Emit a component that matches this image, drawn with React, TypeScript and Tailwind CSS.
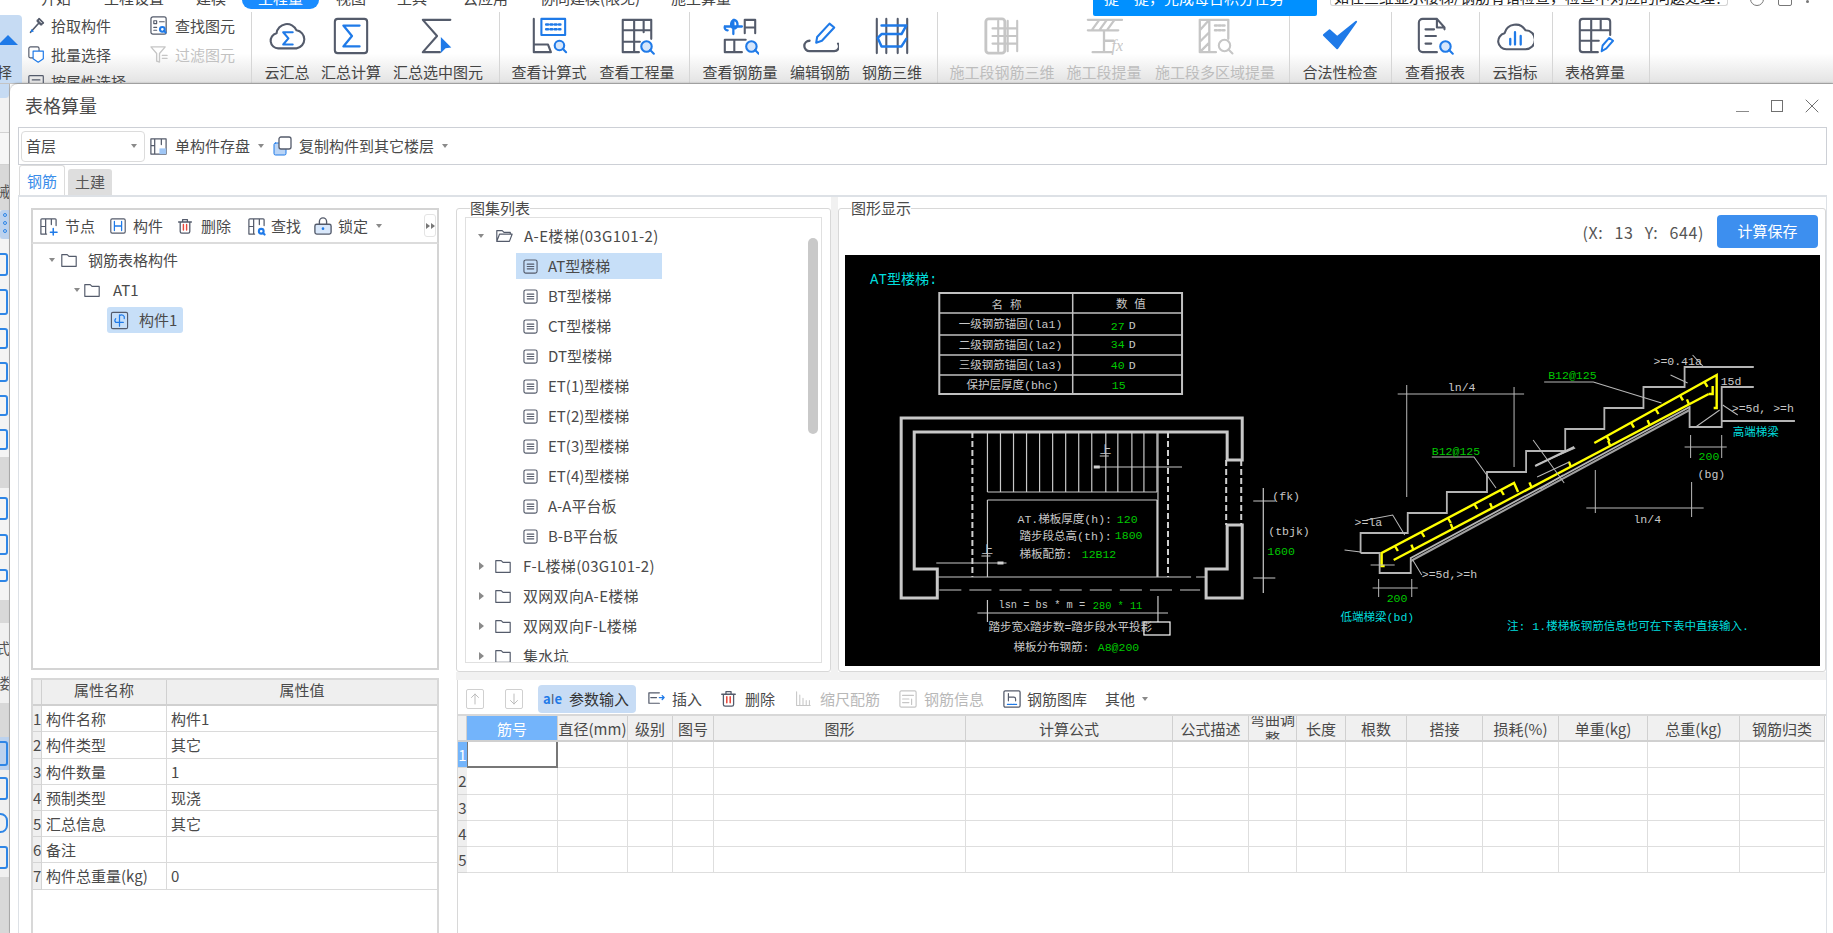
import React from "react";

const S = "#545b6b";
const B = "#1f7ae8";
const G = "#c6c6c6";

function Svg({ size = 38, vb = 40, children, className = "" }: { size?: number; vb?: number; children: React.ReactNode; className?: string }) {
  return (
    <svg width={size} height={size} viewBox={`0 0 ${vb} ${vb}`} fill="none" strokeLinecap="round" strokeLinejoin="round" className={`shrink-0 ${className}`}>
      {children}
    </svg>
  );
}

const Lens = ({ x, y, r = 5, c = B, fill = "#d6e6fb" }: { x: number; y: number; r?: number; c?: string; fill?: string }) => (
  <g stroke={c} strokeWidth={2.2}>
    <circle cx={x} cy={y} r={r} fill={fill} />
    <path d={`M${x + r * 0.7} ${y + r * 0.7}l${r * 0.7} ${r * 0.7}`} />
  </g>
);

const ribbonIcons: Record<string, React.ReactNode> = {
  cloudSum: (
    <>
      <path d="M11 33a8 8 0 0 1-2-15.8A11 11 0 0 1 30 14a9.6 9.6 0 0 1 0 19z" stroke={S} strokeWidth={2.2} />
      <path d="M26 16h-10l5.500 6.500-5.500 6.500h10" stroke={B} strokeWidth={2.2} />
    </>
  ),
  boxSum: (
    <>
      <rect x="3" y="2" width="34" height="36" rx="3" stroke={S} strokeWidth={2.2} />
      <path d="M29 9H12l9 11-9 11h17" stroke={B} strokeWidth={2.4} />
    </>
  ),
  sumSel: (
    <>
      <path d="M33 3H4l15 17L4 37h18" stroke={S} strokeWidth={2.2} />
      <path d="M23 21l11 11-6 1-5 5z" fill={B} />
    </>
  ),
  calc: (
    <>
      <path d="M4 2v35h18l-3-8H4" stroke={S} strokeWidth={2.2} />
      <rect x="12" y="2" width="25" height="17" fill="#fff" stroke={B} strokeWidth={2.2} />
      <path d="M17 8h15M17 13h15" stroke={B} strokeWidth={2.6} strokeDasharray="2 2.500" />
      <Lens x={31} y={30} />
    </>
  ),
  qty: (
    <>
      <path d="M5 37V3h30v20M5 14h30M5 26h18M17 3v34M27 3v13M5 37h17" stroke={S} strokeWidth={2.2} />
      <Lens x={30} y={31} r={5.500} />
    </>
  ),
  rebarQ: (
    <>
      <path d="M14 3a5 5 0 0 0-1 9M14 3a5 5 0 0 1 1 9M4 10h18M13 3v15M4 10a3 3 0 0 0 3 4" stroke={B} strokeWidth={2.4} />
      <path d="M25 17V3h11v14M25 11h11M4 37V24h22M4 37h18M14 24v13" stroke={S} strokeWidth={2.2} />
      <Lens x={32} y={31} r={5.500} />
    </>
  ),
  edit: (
    <>
      <path d="M9 25a5.500 5.500 0 0 0 0 11h26a5 5 0 0 0 4-8" stroke={S} strokeWidth={2.4} />
      <path d="M16 27l1-6L30 7l5 4-13 14z" stroke={B} strokeWidth={2.2} />
    </>
  ),
  r3d: (
    <>
      <path d="M4 2v36M14 2v36M26 2v36M36 2v36" stroke={S} strokeWidth={2.2} />
      <path d="M9 9h26l-5 9H9l-4 4 4 9h21l5-8" stroke={B} strokeWidth={2.6} />
    </>
  ),
  seg3d: (
    <>
      <rect x="3" y="2" width="20" height="36" rx="3" stroke={G} strokeWidth={3} />
      <path d="M10 12h26M10 20h26M10 28h26M16 4v32M26 4v32M36 4v32" stroke={G} strokeWidth={2.200} />
    </>
  ),
  segFx: (
    <>
      <path d="M3 3h36M3 14h32M20 14v22M8 37h20M20 25h10M7 14l8-11M15 14l8-11M23 14l8-11" stroke={G} strokeWidth={2.4} />
      <text x="28" y="36" fontSize="17" fontStyle="italic" fontFamily="'Liberation Serif',serif" fill={G}>fx</text>
    </>
  ),
  segArea: (
    <>
      <path d="M4 37V3h30v20M4 37h17M14 3v34M4 14l10-11M4 26l10-10M4 37l10-10" stroke={G} strokeWidth={2.4} />
      <path d="M20 9h12M20 14h12" stroke={G} strokeWidth={2.6} strokeDasharray="2 2" />
      <Lens x={30} y={30} r={6} c={G} fill="#fff" />
    </>
  ),
  check: <path d="M3 19l14 14L37 5 17 21 9 14z" fill={B} stroke={B} strokeWidth={2} />,
  report: (
    <>
      <path d="M30 13v-2l-8-9H7a4 4 0 0 0-4 4v27a4 4 0 0 0 4 4h15M22 2v9h8" stroke={S} strokeWidth={2.2} />
      <path d="M10 13h9M10 20h11M10 28h6" stroke={S} strokeWidth={2.2} />
      <Lens x={31} y={31} r={5.500} />
    </>
  ),
  cloudBar: (
    <>
      <path d="M11 34a8.500 8.500 0 0 1-2-16.800A12 12 0 0 1 31 14a10 10 0 0 1 0 20z" stroke={S} strokeWidth={2.2} />
      <path d="M15 23v6M20 16v13M26 20v9" stroke={B} strokeWidth={2.4} />
    </>
  ),
  table: (
    <>
      <path d="M23 37H7a3 3 0 0 1-3-3V5a3 3 0 0 1 3-3h26a3 3 0 0 1 3 3v14M4 14h32M4 25h20M16 2v35M26 2v12" stroke={S} strokeWidth={2.2} />
      <path d="M27 36l1-6 7-8 4 3-7 8z" stroke={B} strokeWidth={2} />
    </>
  ),
};

const ribbonGroups: { key: string; label: string; w: string; off?: boolean }[][] = [
  [
    { key: "cloudSum", label: "云汇总", w: "w-[70px]" },
    { key: "boxSum", label: "汇总计算", w: "w-[58px]" },
    { key: "sumSel", label: "汇总选中图元", w: "w-[116px]" },
  ],
  [
    { key: "calc", label: "查看计算式", w: "w-[98px]" },
    { key: "qty", label: "查看工程量", w: "w-[78px]" },
  ],
  [
    { key: "rebarQ", label: "查看钢筋量", w: "w-[100px]" },
    { key: "edit", label: "编辑钢筋", w: "w-[60px]" },
    { key: "r3d", label: "钢筋三维", w: "w-[84px]" },
  ],
  [
    { key: "seg3d", label: "施工段钢筋三维", w: "w-[128px]", off: true },
    { key: "segFx", label: "施工段提量", w: "w-[76px]", off: true },
    { key: "segArea", label: "施工段多区域提量", w: "w-[146px]", off: true },
  ],
  [{ key: "check", label: "合法性检查", w: "w-[100px]" }],
  [{ key: "report", label: "查看报表", w: "w-[86px]" }],
  [{ key: "cloudBar", label: "云指标", w: "w-[70px]" }],
  [{ key: "table", label: "表格算量", w: "w-[84px]" }],
];
const groupWidths = ["w-[247px]", "w-[189px]", "w-[247px]", "w-[351px]", "w-[101px]", "w-[87px]", "w-[72px]", "w-[96px]"];

const Sep = () => <div className="w-px self-stretch mt-[3px] bg-[#d6d6d6] shrink-0" />;
const Caret = ({ className = "" }: { className?: string }) => (
  <span className={`inline-block w-0 h-0 border-x-[3.500px] border-x-transparent border-t-[4px] border-t-[#8a8a8a] shrink-0 ${className}`} />
);
const CaretR = () => <span className="inline-block w-0 h-0 border-y-[4px] border-y-transparent border-l-[5px] border-l-[#8a8a8a] shrink-0" />;

function TopRow() {
  return (
    <div className="relative z-10 h-[9px] flex bg-white text-[15px] text-[#444] pl-[41px]">
      {[
        ["开始", "w-[63px]"],
        ["工程设置", "w-[92px]"],
        ["建模", "w-[46px]"],
      ].map(([t, w]) => (
        <div key={t} className={`${w} h-[9px] overflow-hidden`}>
          <div className="-mt-[12px] leading-[20px]">{t}</div>
        </div>
      ))}
      <div className="w-[77px] h-[9px] overflow-hidden bg-[#1a8cff] rounded-b-[9px] text-white text-center">
        <div className="-mt-[12px] leading-[20px]">工程量</div>
      </div>
      <div className="w-[17px]" />
      {[
        ["视图", "w-[61px]"],
        ["工具", "w-[66px]"],
        ["云应用", "w-[77px]"],
        ["协同建模(限免)", "w-[131px]"],
        ["施工算量", "w-[422px]"],
      ].map(([t, w]) => (
        <div key={t} className={`${w} h-[9px] overflow-hidden`}>
          <div className="-mt-[12px] leading-[20px]">{t}</div>
        </div>
      ))}
      <div className="w-[224px] h-[16px] bg-[#0090ff] rounded-b-[2px] overflow-hidden text-white pl-[11px] shrink-0">
        <div className="-mt-[12px] leading-[20px] whitespace-nowrap">提一提，完成每日积分任务</div>
      </div>
      <div className="ml-[13px] w-[398px] h-[6px] border-x border-b border-[#d4d4d4] rounded-b-[3px] overflow-hidden shrink-0 pl-[3px] text-[#222]">
        <div className="-mt-[13px] leading-[20px] whitespace-nowrap">如在三维显示楼梯/钢筋有错检查，检查中对应的问题处理？</div>
      </div>
      <div className="ml-[22px] h-[6px] flex gap-[14px] overflow-hidden">
        <div className="w-[14px] h-[14px] -mt-[8px] rounded-full border border-[#777]" />
        <div className="w-[14px] h-[14px] -mt-[8px] rounded-[2px] border border-[#777]" />
        <div className="w-[3px] h-[3px] rounded-full bg-[#777]" />
      </div>
    </div>
  );
}

function SmallTool({ icon, label, off, cls = "" }: { icon: React.ReactNode; label: string; off?: boolean; cls?: string }) {
  return (
    <div className={`flex items-center ${cls} ${off ? "text-[#c2c2c2]" : "text-[#4a4a4a]"}`}>
      {icon}
      <span className="whitespace-nowrap">{label}</span>
    </div>
  );
}

function Ribbon() {
  return (
    <div className="h-[75px] flex overflow-hidden bg-linear-to-b from-white via-white via-60% to-[#e3e3e3] border-b border-[#c4c4c4] text-[15px] leading-[20px] shrink-0">
      <div className="w-[22px] mt-[6px] bg-[#c6dbf3] rounded-tr-[4px] shrink-0 overflow-hidden text-[#444]">
        <div className="w-0 h-0 mt-[20px] -ml-[2px] border-x-[10px] border-x-transparent border-b-[10px] border-b-[#1f7ae8]" />
        <div className="mt-[17px] -ml-[3px]">择</div>
      </div>
      <div className="w-[229px] shrink-0 pt-[2px] pl-[6px] flex">
        <div className="w-[122px]">
          <SmallTool
            cls="h-[29px] gap-[6px]"
            label="拾取构件"
            icon={
              <Svg size={17} vb={20}>
                <path d="M3 18l9-10M11 4l5 5M13 2l5 5-3 2-4-4z" stroke={S} strokeWidth={2} />
                <path d="M3 18l1-4 3 3z" fill={B} />
              </Svg>
            }
          />
          <SmallTool
            cls="h-[29px] gap-[6px]"
            label="批量选择"
            icon={
              <Svg size={17} vb={20}>
                <rect x="1" y="1" width="12" height="13" rx="2" stroke={S} strokeWidth={1.400} />
                <path d="M6 6h12v9l-6 4-6-4z" fill="#fff" stroke={B} strokeWidth={1.400} />
              </Svg>
            }
          />
          <SmallTool
            cls="h-[22px] mt-[2px] gap-[6px]"
            label="按属性选择"
            icon={
              <Svg size={17} vb={20}>
                <rect x="1" y="2" width="17" height="16" rx="1" stroke={S} strokeWidth={1.400} />
                <path d="M5 7h9M5 12h9" stroke={S} strokeWidth={1.400} />
              </Svg>
            }
          />
        </div>
        <div>
          <SmallTool
            cls="h-[29px] gap-[6px]"
            label="查找图元"
            icon={
              <Svg size={19} vb={20}>
                <rect x="1" y="1" width="16" height="18" rx="2" stroke={S} strokeWidth={1.300} />
                <path d="M4 5h3v3H4zM10 6h5M4 12h3M4 15h3" stroke={S} strokeWidth={1.200} />
                <Lens x={13} y={14} r={2.500} fill="#fff" />
              </Svg>
            }
          />
          <SmallTool
            cls="h-[29px] gap-[6px]"
            off
            label="过滤图元"
            icon={
              <Svg size={19} vb={20}>
                <path d="M1 2h15l-6 7v9l-3-1V9z" stroke={G} strokeWidth={1.400} />
                <path d="M13 11h5M13 14h5" stroke={G} strokeWidth={1.400} />
              </Svg>
            }
          />
        </div>
      </div>
      <Sep />
      {ribbonGroups.map((g, i) => (
        <React.Fragment key={i}>
          <div className={`${groupWidths[i]} flex shrink-0`}>
            {g.map((b) => (
              <div key={b.label} className={`${b.w} shrink-0 flex flex-col items-center pt-[8px]`}>
                <Svg>{ribbonIcons[b.key]}</Svg>
                <span className={`mt-[7px] whitespace-nowrap ${b.off ? "text-[#bdbdbd]" : "text-[#444]"}`}>{b.label}</span>
              </div>
            ))}
          </div>
          <Sep />
        </React.Fragment>
      ))}
      <div className="flex-1" />
    </div>
  );
}

const StripIcon = ({ cls }: { cls: string }) => <div className={`-ml-[7px] w-[15px] border-2 border-[#2f86e6] rounded-[3px] shrink-0 ${cls}`} />;

function Sidebar() {
  return (
    <div className="w-[10px] shrink-0 bg-[#ececec] border-r border-[#b4b4b4] overflow-hidden flex flex-col text-[15px] leading-[20px] text-[#555]">
      <div className="h-[14px] bg-[#c6dbf3] rounded-br-[4px] shrink-0" />
      <div className="h-[34px] bg-[#f2f2f2] shrink-0" />
      <div className="h-[33px] bg-[#f6f6f6] border-y border-[#d2d2d2] shrink-0" />
      <div className="h-[45px] bg-[#d8d8d8] shrink-0 pt-[16px]">
        <div className="-ml-[5px]">械</div>
      </div>
      <div className="h-[29px] bg-[#bcd2ee] rounded-l-[3px] shrink-0 pl-[3px] flex flex-col gap-[4px] py-[3px]">
        <div className="w-[4px] h-[4px] rounded-full border border-[#2f86e6]" />
        <div className="w-[4px] h-[4px] rounded-full border border-[#2f86e6]" />
        <div className="w-[4px] h-[4px] rounded-full border border-[#2f86e6]" />
      </div>
      <div className="shrink-0 flex flex-col bg-[#f4f4f4] pt-[14px] gap-[13px] h-[218px]">
        <StripIcon cls="h-[23px]" />
        <StripIcon cls="h-[26px]" />
        <StripIcon cls="h-[21px]" />
        <StripIcon cls="h-[20px]" />
        <StripIcon cls="h-[21px]" />
        <StripIcon cls="h-[21px]" />
      </div>
      <div className="h-[31px] bg-[#d8d8d8] shrink-0" />
      <div className="h-[112px] shrink-0 flex flex-col bg-[#f4f4f4] pt-[9px] gap-[14px]">
        <StripIcon cls="h-[23px]" />
        <StripIcon cls="h-[21px]" />
        <StripIcon cls="h-[13px]" />
      </div>
      <div className="h-[23px] bg-[#d8d8d8] shrink-0" />
      <div className="h-[80px] bg-[#f0f0f0] shrink-0 pt-[15px]">
        <div className="-ml-[5px]">式</div>
        <div className="-ml-[5px] mt-[15px]">楼</div>
      </div>
      <div className="h-[34px] bg-[#d8d8d8] shrink-0" />
      <div className="h-[33px] bg-[#bcd2ee] shrink-0">
        <StripIcon cls="h-[25px] mt-[4px]" />
      </div>
      <div className="h-[107px] bg-[#f0f0f0] shrink-0 flex flex-col pt-[7px] gap-[13px]">
        <StripIcon cls="h-[23px]" />
        <StripIcon cls="h-[20px] rounded-full" />
        <StripIcon cls="h-[23px]" />
      </div>
      <div className="flex-1 bg-[#d8d8d8]" />
    </div>
  );
}

function ToolItem({ cls, icon, label, gap = "gap-[6px]", off }: { cls: string; icon: React.ReactNode; label: string; gap?: string; off?: boolean }) {
  return (
    <div className={`flex items-center shrink-0 ${cls} ${gap} ${off ? "text-[#b8b8b8]" : "text-[#4a4a4a]"}`}>
      {icon}
      <span className="whitespace-nowrap">{label}</span>
    </div>
  );
}

const HBox = ({ extra }: { extra?: React.ReactNode }) => (
  <Svg size={19} vb={20}>
    <path d="M2 18V3a1 1 0 0 1 1-1h14a1 1 0 0 1 1 1v6M2 18h6M7 2v16M2 10h5M13 2v6" stroke={S} strokeWidth={1.300} />
    {extra}
  </Svg>
);

function LeftColumn() {
  return (
    <div className="w-[437px] shrink-0 pl-[12px] pr-[17px] pt-[11px] flex flex-col text-[15px] leading-[20px]">
      <div className="h-[36px] border-2 border-[#d4d4d4] border-b-[#dcdcdc] flex items-center shrink-0 relative">
        <ToolItem
          cls="ml-[6px]"
          gap="gap-[7px]"
          label="节点"
          icon={<HBox extra={<path d="M15 12v7M12 16h7" stroke={B} strokeWidth={1.600} />} />}
        />
        <ToolItem
          cls="ml-[14px]"
          label="构件"
          icon={
            <Svg size={18} vb={20}>
              <rect x="2" y="2" width="16" height="16" rx="1.500" stroke={S} strokeWidth={1.300} />
              <path d="M6 5v10M14 5v10M6 10h8" stroke={B} strokeWidth={1.400} />
            </Svg>
          }
        />
        <ToolItem
          cls="ml-[14px]"
          gap="gap-[8px]"
          label="删除"
          icon={
            <Svg size={16} vb={20}>
              <path d="M2 5h16M7 5V2h6v3M4 5v12a2 2 0 0 0 2 2h8a2 2 0 0 0 2-2V5" stroke={S} strokeWidth={1.600} />
              <path d="M8 8v7M12 8v7" stroke="#e8483b" strokeWidth={1.800} />
            </Svg>
          }
        />
        <ToolItem cls="ml-[16px]" gap="gap-[5px]" label="查找" icon={<HBox extra={<Lens x={15} y={15} r={2.500} fill="#fff" />} />} />
        <ToolItem
          cls="ml-[13px]"
          label="锁定"
          icon={
            <Svg size={18} vb={20}>
              <path d="M6 8V5a4 4 0 0 1 8 0v3" stroke={S} strokeWidth={1.500} />
              <rect x="1" y="8" width="18" height="11" rx="2" stroke={S} strokeWidth={1.500} fill="#d9e8fb" />
              <circle cx="10" cy="13" r="1.500" fill={B} />
            </Svg>
          }
        />
        <Caret className="ml-[8px]" />
        <div className="absolute right-[1px] top-[4px] w-[12px] h-[23px] border border-[#e4e4e4] rounded-[3px] flex items-center justify-center gap-px">
          <span className="w-0 h-0 border-y-[3px] border-y-transparent border-l-[4px] border-l-[#777]" />
          <span className="w-0 h-0 border-y-[3px] border-y-transparent border-l-[4px] border-l-[#777]" />
        </div>
      </div>
      <div className="h-[426px] border-x-2 border-b-2 border-[#d4d4d4] shrink-0 text-[#4a4a4a] pt-[1px]">
        <div className="h-[30px] flex items-center pl-[16px]">
          <Caret className="mr-[5px]" />
          <Folder />
          <span className="ml-[10px]">钢筋表格构件</span>
        </div>
        <div className="h-[30px] flex items-center pl-[41px]">
          <Caret className="mr-[3px]" />
          <Folder />
          <span className="ml-[12px]">AT1</span>
        </div>
        <div className="ml-[74px] w-[76px] h-[26px] mt-[2px] bg-[#c7dff8] rounded-[3px] flex items-center pl-[3px] gap-[10px]">
          <Svg size={19} vb={20}>
            <rect x="1.500" y="1.500" width="17" height="17" rx="1.500" stroke={S} strokeWidth={1.200} />
            <path d="M10 4v12M6 8a3 3 0 0 0 0 4h8M10 5a3 3 0 0 1 5 3" stroke={B} strokeWidth={1.300} />
          </Svg>
          <span>构件1</span>
        </div>
      </div>
      <div className="mt-[8px] flex-1 border-2 border-b-0 border-[#d8d8d8] text-[#4a4a4a]">
        <div className="grid grid-cols-[9px_125px_1fr] auto-rows-[26.200px]">
          <div className="h-[26px] bg-[#efefef] border-r border-b-2 border-[#d0d0d0]" />
          <div className="h-[26px] bg-[#efefef] border-r border-b-2 border-[#d0d0d0] text-center">属性名称</div>
          <div className="h-[26px] bg-[#efefef] border-b-2 border-[#d0d0d0] text-center">属性值</div>
          {[
            ["构件名称", "构件1"],
            ["构件类型", "其它"],
            ["构件数量", "1"],
            ["预制类型", "现浇"],
            ["汇总信息", "其它"],
            ["备注", ""],
            ["构件总重量(kg)", "0"],
          ].map(([a, b], i) => (
            <React.Fragment key={a}>
              <div className="bg-[#efefef] border-r border-b border-[#d4d4d4] text-center leading-[26px] overflow-hidden">{i + 1}</div>
              <div className="border-r border-b border-[#dadada] pl-[4px] leading-[26px] whitespace-nowrap overflow-hidden">{a}</div>
              <div className="border-b border-[#dadada] pl-[4px] leading-[26px]">{b}</div>
            </React.Fragment>
          ))}
        </div>
      </div>
    </div>
  );
}

const Folder = ({ open }: { open?: boolean }) => (
  <Svg size={18} vb={20}>
    {open ? (
      <path d="M2 16V4h6l2 2h7v2M2 16l3-8h14l-3 8z" stroke={S} strokeWidth={1.300} />
    ) : (
      <path d="M2 17V4h6l2 2h8v11z" stroke={S} strokeWidth={1.300} />
    )}
  </Svg>
);

const ListIcon = () => (
  <Svg size={15} vb={16}>
    <rect x="1" y="1" width="14" height="14" rx="2" stroke={S} strokeWidth={1.200} />
    <path d="M4.500 5.500h7M4.500 8h7M4.500 10.500h7" stroke={S} strokeWidth={1.200} />
  </Svg>
);

function AtlasList() {
  const items = ["AT型楼梯", "BT型楼梯", "CT型楼梯", "DT型楼梯", "ET(1)型楼梯", "ET(2)型楼梯", "ET(3)型楼梯", "ET(4)型楼梯", "A-A平台板", "B-B平台板"];
  const folders = ["F-L楼梯(03G101-2)", "双网双向A-E楼梯", "双网双向F-L楼梯", "集水坑"];
  return (
    <fieldset className="w-[375px] shrink-0 mt-[2px] h-[473px] border border-[#d8d8d8] rounded-[3px] px-[8px] pb-[8px]">
      <legend className="ml-[5px] h-[18px] leading-[18px] text-[15px] text-[#4a4a4a]">图集列表</legend>
      <div className="relative h-[446px] border border-[#e0e0e0] overflow-hidden pt-[3px] text-[15px] leading-[20px] text-[#4a4a4a]">
        <div className="h-[30px] flex items-center pl-[12px]">
          <Caret />
          <span className="w-[11px]" />
          <Folder open />
          <span className="ml-[11px] whitespace-nowrap tracking-[0.4px]">A-E楼梯(03G101-2)</span>
        </div>
        {items.map((t, i) => (
          <div key={t} className="h-[30px] flex items-center">
            <div className={`ml-[50px] w-[146px] h-[26px] pl-[7px] flex items-center gap-[10px] ${i === 0 ? "bg-[#c7dff8]" : ""}`}>
              <ListIcon />
              <span className="whitespace-nowrap">{t}</span>
            </div>
          </div>
        ))}
        {folders.map((t) => (
          <div key={t} className="h-[30px] flex items-center pl-[13px]">
            <CaretR />
            <span className="w-[10px]" />
            <Folder />
            <span className="ml-[11px] whitespace-nowrap tracking-[0.3px]">{t}</span>
          </div>
        ))}
        <div className="absolute right-[3px] top-[20px] w-[10px] h-[196px] bg-[#c9c9c9] rounded-full" />
      </div>
    </fieldset>
  );
}

function T({ x, y, c = "#c8c8c8", s = 11.500, a, children }: { x: number; y: number; c?: string; s?: number; a?: "middle"; children: React.ReactNode }) {
  return (
    <text x={x} y={y} fill={c} fontSize={s} textAnchor={a} dominantBaseline="central" fontFamily="'Liberation Mono','Noto Sans CJK SC',monospace">
      {children}
    </text>
  );
}

function Drawing() {
  const GR = "#00c800";
  const CY = "#00dcdc";
  const treads = [142, 155, 168, 181, 194, 207, 220, 233, 246, 260, 272, 286, 298, 311];
  const lerp = (a: number, b: number, t: number) => a + (b - a) * t;
  const ticksA = Array.from({ length: 8 }, (_, i) => (i + 0.5) / 8);
  const ticksB = Array.from({ length: 5 }, (_, i) => (i + 0.5) / 5);
  return (
    <svg width={975} height={411} viewBox="0 0 972 411" preserveAspectRatio="none" className="block bg-black shrink-0" fill="none">
      <T x={25} y={25} c={CY} s={14}>AT型楼梯:</T>
      <g stroke="#c0c0c0" strokeWidth={1.500}>
        <rect x={94} y={38} width={242} height={101} strokeWidth={2} />
        <path d="M227 38v101M94 58h242M94 80h242M94 100h242M94 120h242" />
      </g>
      <T x={161} y={51} a="middle">名  称</T>
      <T x={285} y={50} a="middle">数  值</T>
      <T x={165} y={70} a="middle">一级钢筋锚固(la1)</T>
      <T x={165} y={91} a="middle">二级钢筋锚固(la2)</T>
      <T x={165} y={111} a="middle">三级钢筋锚固(la3)</T>
      <T x={167} y={131} a="middle">保护层厚度(bhc)</T>
      <T x={265} y={72} c={GR}>27</T><T x={283} y={71}>D</T>
      <T x={265} y={90} c={GR}>34</T><T x={283} y={90}>D</T>
      <T x={265} y={111} c={GR}>40</T><T x={283} y={111}>D</T>
      <T x={266} y={131} c={GR}>15</T>

      <g stroke="#c8c8c8" strokeWidth={3}>
        <path d="M56 343V163H396V205H381V177H69V314H92V343Z" />
        <path d="M396 270V343H360V314H381V270Z" />
      </g>
      <g stroke="#c8c8c8" strokeWidth={1.200}>
        {treads.map((x) => (
          <path key={x} d={`M${x} 177V237`} />
        ))}
        <path d="M142 237H311M142 245H311M142 245V322M311 245V322M312 177V322M92 322H345M350 322H360" />
        <path d="M94 335H354" strokeDasharray="22 8" />
        <path d="M251 212H336M91 308H161M254 201h9M136 301h9" />
        <path d="M417 233V338M407 246H429M407 323H429" />
        <path d="M132 358H322M142 345V367M312 341V367" />
        <rect x={298} y={367} width={26} height={13} stroke="#fff" />
      </g>
      <path d="M127 177V322M322 177V322M380 205V270M395 205V270" stroke="#d0d0d0" strokeWidth={2} strokeDasharray="6 3" />
      <path d="M248 212h6M152 308h6" stroke="#d0d0d0" strokeWidth={3} />
      <T x={254} y={196}>上</T>
      <T x={136} y={296}>上</T>
      <T x={172} y={265}>AT.梯板厚度(h):</T><T x={271} y={265} c={GR}>120</T>
      <T x={174} y={282}>踏步段总高(th):</T><T x={269} y={281} c={GR}>1800</T>
      <T x={174} y={300}>梯板配筋:</T><T x={236} y={300} c={GR}>12B12</T>
      <T x={426} y={242}>(fk)</T>
      <T x={422} y={277}>(tbjk)</T>
      <T x={421} y={297} c={GR}>1600</T>
      <T x={153} y={350} s={10.300}>lsn = bs * m =</T><T x={247} y={351} c={GR} s={10.300}>280 * 11</T>
      <T x={143} y={373}>踏步宽X踏步数=踏步段水平投影</T>
      <T x={168} y={393}>梯板分布钢筋:</T><T x={252} y={393} c={GR}>A8@200</T>

      <path d="M514 298V278H561V258H600V237H640V217H679V196H718V174H757V153H796V132H837V112H906M514 298H533V318H564V303L842 152V172H874V132H906M874 166H947" stroke="#b4b4b4" strokeWidth={1.800} />
      <path d="M564 306L842 155" stroke="#a0a0a0" strokeWidth={2} />
      <g stroke="#ffff00" strokeWidth={2.400}>
        <path d="M538 311H535V298L667 228L671 237" />
        <path d="M547 305L861 139" />
        <path d="M747 188L869 120V153H866M861 139h4V131" />
        {ticksA.map((t, i) => (
          <path key={i} d={`M${lerp(547, 861, t)} ${lerp(305, 139, t)}l-2-5`} />
        ))}
        {ticksB.map((t, i) => (
          <React.Fragment key={i}>
            <path d={`M${lerp(535, 667, t)} ${lerp(298, 228, t)}l3 5`} />
            <path d={`M${lerp(747, 869, t)} ${lerp(188, 120, t)}l3 5`} />
          </React.Fragment>
        ))}
      </g>
      <g stroke="#b8b8b8" strokeWidth={1}>
        <path d="M551 139H677M560 130V242M667 132V212M739 253H856M748 215V258M844 227V262" />
        <path d="M837 192H879M843 180V203M874 180V203M526 333H571M532 324V342M565 324V342" />
        <path d="M585 202H627L649 233M697 127H746L814 148" />
        <path d="M686 185L717 228M689 210L728 193M690 222L722 207M693 234L716 220" />
        <path d="M514 297L498 295M520 265L546 260L558 280M524 310H548M566 305L575 320" />
        <path d="M823 120L840 128M845 100L856 112M875 150L890 160M848 172L872 155" />
      </g>
      <path d="M688 211L727 192" stroke="#c0c0c0" strokeWidth={2} />
      <T x={601} y={133}>ln/4</T>
      <T x={786} y={265}>ln/4</T>
      <T x={585} y={197} c={GR}>B12@125</T>
      <T x={701} y={121} c={GR}>B12@125</T>
      <T x={806} y={107}>&gt;=0.41a</T>
      <T x={873} y={127}>15d</T>
      <T x={884} y={154}>&gt;=5d, &gt;=h</T>
      <T x={885} y={178} c={CY}>高端梯梁</T>
      <T x={851} y={202} c={GR}>200</T>
      <T x={850} y={220}>(bg)</T>
      <T x={508} y={268}>&gt;=la</T>
      <T x={575} y={320}>&gt;=5d,&gt;=h</T>
      <T x={540} y={344} c={GR}>200</T>
      <T x={494} y={363} c={CY}>低端梯梁(bd)</T>
      <T x={660} y={372} c={CY}>注: 1.楼梯板钢筋信息也可在下表中直接输入.</T>
    </svg>
  );
}

function Graphic() {
  return (
    <fieldset className="flex-1 mt-[2px] h-[473px] border border-[#d8d8d8] rounded-[3px] pl-[6px] pr-[4px]">
      <legend className="ml-[6px] h-[18px] leading-[18px] text-[15px] text-[#4a4a4a]">图形显示</legend>
      <div className="-mt-[2px] h-[33px] mb-[7px] flex items-center justify-end text-[16px] text-[#555]">
        <span className="mr-[13px] whitespace-nowrap tracking-[0.6px] [word-spacing:7px]">(X: 13 Y: 644)</span>
        <div className="w-[101px] h-[33px] mr-[3px] rounded-[4px] bg-[#3d8fef] text-white text-[15px] flex items-center justify-center">计算保存</div>
      </div>
      <Drawing />
    </fieldset>
  );
}

const headers = ["", "筋号", "直径(mm)", "级别", "图号", "图形", "计算公式", "公式描述", "弯曲调整", "长度", "根数", "搭接", "损耗(%)", "单重(kg)", "总重(kg)", "钢筋归类"];
const gridCols = "grid grid-cols-[9px_91px_70px_45px_41px_252px_207px_76px_48px_49px_61px_76px_76px_89px_92px_85px]";

function BarTable() {
  return (
    <div className={`${gridCols} auto-rows-[26.200px] text-[15px] leading-[19px] text-[#4a4a4a]`}>
      {headers.map((h, i) => (
        <div
          key={i}
          className={`h-[26px] flex items-center justify-center text-center overflow-hidden border-r border-b-2 border-[#d0d0d0] ${i === 1 ? "bg-[#73b4fb] text-white" : "bg-[#f0f0f0]"}`}
        >
          {h}
        </div>
      ))}
      {[1, 2, 3, 4, 5].map((r) =>
        headers.map((_, c) => {
          if (c === 0)
            return (
              <div key={`${r}-${c}`} className={`flex items-center justify-center overflow-hidden border-b border-[#d6d6d6] ${r === 1 ? "bg-[#73b4fb] text-white" : "bg-[#efefef]"}`}>
                {r}
              </div>
            );
          if (c === 1 && r === 1) return <div key={`${r}-${c}`} className="border-2 border-t-0 border-l-0 border-[#777] shadow-[inset_1px_0_0_#777]" />;
          return <div key={`${r}-${c}`} className="border-r border-b border-[#dedede]" />;
        })
      )}
    </div>
  );
}

function BottomPanel() {
  return (
    <div className="flex-1 flex flex-col border-l border-[#d8d8d8] ml-px text-[15px] leading-[20px]">
      <div className="h-[36px] shrink-0 border-b-2 border-[#d8d8d8] flex items-center pt-[3px]">
        <div className="ml-[8px] w-[18px] h-[20px] border border-[#d0d0d0] rounded-[2px] flex items-center justify-center shrink-0">
          <Svg size={12} vb={12}><path d="M6 11V1M2.500 4.500L6 1l3.500 3.500" stroke="#bdbdbd" /></Svg>
        </div>
        <div className="ml-[21px] w-[18px] h-[20px] border border-[#d0d0d0] rounded-[2px] flex items-center justify-center shrink-0">
          <Svg size={12} vb={12}><path d="M6 1v10M2.500 7.500L6 11l3.500-3.500" stroke="#bdbdbd" /></Svg>
        </div>
        <div className="ml-[15px] w-[98px] h-[28px] bg-[#c7dcf5] rounded-[4px] flex items-center pl-[5px] gap-[4px] text-[#333] shrink-0">
          <span className="w-[22px] text-[13px] font-bold text-[#1f7ae8] flex items-center">a<span className="text-[#545b6b] font-normal">I</span>e</span>
          <span className="whitespace-nowrap">参数输入</span>
        </div>
        <ToolItem
          cls="ml-[11px]"
          label="插入"
          icon={
            <Svg size={19} vb={20}>
              <path d="M13 4H2v11h11M4 9h6" stroke={S} strokeWidth={1.300} />
              <path d="M13 9h5m-2-2l2 2-2 2" stroke={B} strokeWidth={1.400} />
            </Svg>
          }
        />
        <ToolItem
          cls="ml-[18px]"
          gap="gap-[8px]"
          label="删除"
          icon={
            <Svg size={17} vb={20}>
              <path d="M2 5h16M7 5V2h6v3M4 5v12a2 2 0 0 0 2 2h8a2 2 0 0 0 2-2V5" stroke={S} strokeWidth={1.500} />
              <path d="M8 8v7M12 8v7" stroke="#e8483b" strokeWidth={1.800} />
            </Svg>
          }
        />
        <ToolItem
          cls="ml-[20px]"
          gap="gap-[9px]"
          off
          label="缩尺配筋"
          icon={
            <Svg size={16} vb={20}>
              <path d="M2 1v17h17M6 5v13M10 9v9M14 12v6M18 12v6" stroke={G} strokeWidth={1.300} />
            </Svg>
          }
        />
        <ToolItem
          cls="ml-[19px]"
          gap="gap-[7px]"
          off
          label="钢筋信息"
          icon={
            <Svg size={18} vb={20}>
              <rect x="1" y="1" width="18" height="18" rx="1.500" stroke={G} strokeWidth={1.300} />
              <path d="M4 6h12M4 10h7M4 14h7M14 10v6" stroke={G} strokeWidth={1.300} />
            </Svg>
          }
        />
        <ToolItem
          cls="ml-[19px]"
          label="钢筋图库"
          icon={
            <Svg size={18} vb={20}>
              <rect x="1" y="1" width="18" height="18" rx="1.500" stroke={S} strokeWidth={1.400} />
              <path d="M6 4v8M6 8h6a2 2 0 0 1 2 2v2" stroke={S} strokeWidth={1.300} />
              <path d="M5 16h10" stroke={B} strokeWidth={1.500} strokeDasharray="2 1" />
            </Svg>
          }
        />
        <span className="ml-[18px] text-[#4a4a4a]">其他</span>
        <Caret className="ml-[7px]" />
      </div>
      <BarTable />
    </div>
  );
}

export default function App() {
  return (
    <div className="w-[1833px] h-[933px] overflow-hidden flex flex-col bg-white font-['Noto_Sans_CJK_SC','Noto_Sans',sans-serif]">
      <TopRow />
      <Ribbon />
      <div className="flex-1 min-h-0 flex">
        <Sidebar />
        <div className="flex-1 min-w-0 flex flex-col bg-white rounded-tl-[8px] shadow-[0_-1px_2px_rgba(0,0,0,0.25)]">
          <div className="h-[43px] shrink-0 flex items-center pl-[15px] text-[18px] text-[#4a4a4a]">
            <span>表格算量</span>
            <div className="ml-auto flex items-center pr-[14px]">
              <div className="w-[13px] h-px bg-[#8a8a8a] mt-[12px]" />
              <div className="ml-[22px] w-[12px] h-[12px] border border-[#707070]" />
              <Svg size={14} vb={14} className="ml-[22px]">
                <path d="M1 1l12 12M13 1L1 13" stroke="#707070" />
              </Svg>
            </div>
          </div>
          <div className="h-[38px] shrink-0 ml-[8px] mr-[6px] border border-[#cdd0d6] flex items-center text-[15px] leading-[20px] text-[#4a4a4a]">
            <div className="ml-[2px] w-[124px] h-[31px] border border-[#dcdcdc] rounded-[4px] flex items-center pl-[4px] shrink-0">
              <span>首层</span>
              <Caret className="ml-auto mr-[7px]" />
            </div>
            <div className="ml-[4px] flex items-center gap-[7px] shrink-0">
              <Svg size={19} vb={20}>
                <path d="M2 18V2h16v16zM6 2v16M2 9h4M13 2v6" stroke={S} strokeWidth={1.300} />
                <rect x="11" y="12" width="7" height="6" fill="#9fc6f5" />
              </Svg>
              <span>单构件存盘</span>
            </div>
            <Caret className="ml-[8px]" />
            <div className="ml-[9px] flex items-center gap-[6px] shrink-0">
              <Svg size={20} vb={20}>
                <rect x="1" y="7" width="12" height="12" rx="1.500" fill="#b9d4f6" stroke={B} />
                <rect x="6" y="1" width="12" height="12" rx="2" fill="#fff" stroke={S} strokeWidth={1.300} />
              </Svg>
              <span className="whitespace-nowrap">复制构件到其它楼层</span>
            </div>
            <Caret className="ml-[8px]" />
          </div>
          <div className="h-[30px] shrink-0 ml-[9px] flex items-end text-[15px] leading-[20px]">
            <div className="w-[46px] h-[30px] bg-white border-x border-t border-[#dcdcdc] rounded-t-[3px] flex items-center justify-center text-[#3b8eea]">钢筋</div>
            <div className="ml-[3px] w-[44px] h-[26px] bg-[#dedede] rounded-t-[3px] flex items-center justify-center text-[#555]">土建</div>
          </div>
          <div className="flex-1 min-h-0 ml-[8px] mr-[6px] border-t-2 border-x border-[#dde1e6] flex">
            <LeftColumn />
            <div className="flex-1 min-w-0 flex flex-col">
              <div className="h-[475px] shrink-0 flex">
                <AtlasList />
                <div className="w-[7px] bg-[#f1f1f1] shrink-0" />
                <Graphic />
              </div>
              <div className="h-[8px] bg-[#f1f1f1] shrink-0" />
              <BottomPanel />
            </div>
          </div>
        </div>
      </div>
    </div>
  );
}
